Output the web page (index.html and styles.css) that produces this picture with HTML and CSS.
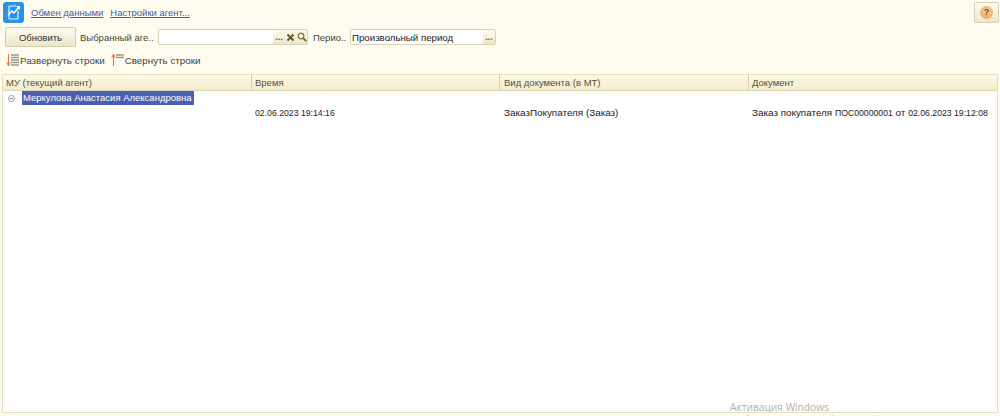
FILE: index.html
```html
<!DOCTYPE html>
<html lang="ru">
<head>
    <meta charset="UTF-8">
    <title>Обмен данными</title>
    <link rel="stylesheet" href="styles.css">
</head>
<body>
    <div class="topbar">
        <svg class="app-icon" width="21" height="21" viewBox="0 0 21 21">
            <rect width="21" height="21" rx="3" fill="#2a93e8"/>
            <path d="M13 4 H7 Q6 4 6 5 V16 Q6 17 7 17 H14 Q15 17 15 16 V9" fill="none" stroke="#e8f5ff" stroke-width="1.2"/>
            <path d="M5 13 L9 9 L11 11 L16 5" fill="none" stroke="#fff" stroke-width="1.5"/>
            <path d="M13 4 H17 V8 Z" fill="#fff"/>
        </svg>
        <a class="top-link" href="#">Обмен данными</a>
        <a class="top-link" href="#">Настройки агент...</a>
        <button class="help-btn"><span class="help-mark">?</span></button>
    </div>

    <div class="filters">
        <button class="refresh-btn">Обновить</button>
        <span class="field-label">Выбранный аге..</span>
        <div class="field field-agent">
            <span class="field-value"></span>
            <span class="field-btn">...</span>
            <span class="field-btn field-btn-icon">
                <svg width="9" height="9" viewBox="0 0 9 9">
                    <path d="M1.5 1.5 L7.5 7.5 M7.5 1.5 L1.5 7.5" stroke="#5e5a30" stroke-width="1.9"/>
                </svg>
            </span>
            <span class="field-btn field-btn-icon">
                <svg width="10" height="10" viewBox="0 0 10 10">
                    <circle cx="4" cy="4" r="2.8" fill="none" stroke="#8a7c3c" stroke-width="1.3"/>
                    <path d="M6 6 L9.2 9.2" stroke="#6a5c2c" stroke-width="1.7"/>
                </svg>
            </span>
        </div>
        <span class="field-label label-period">Перио..</span>
        <div class="field field-period">
            <span class="field-value">Произвольный период</span>
            <span class="field-btn">...</span>
        </div>
    </div>

    <div class="actions">
        <span class="action">
            <svg width="13" height="12" viewBox="0 0 13 12">
                <path d="M2.5 0 V11 M0.8 8.5 L2.5 11.5 L4.2 8.5" fill="none" stroke="#e8764a" stroke-width="1.1"/>
                <path d="M5 1 H13 M5 3.5 H13 M5 6 H13 M5 8.5 H13 M5 11 H13" stroke="#96968c" stroke-width="1.3"/>
            </svg>
            Развернуть строки
        </span>
        <span class="action">
            <svg width="13" height="12" viewBox="0 0 13 12">
                <path d="M2.5 12 V1 M0.8 3.5 L2.5 0.5 L4.2 3.5" fill="none" stroke="#e8764a" stroke-width="1.1"/>
                <path d="M5 1 H13 M5 3.5 H13" stroke="#96968c" stroke-width="1.3"/>
            </svg>
            Свернуть строки
        </span>
    </div>

    <div class="grid">
        <div class="grid-head">
            <div class="col col-agent">МУ (текущий агент)</div>
            <div class="col col-time">Время</div>
            <div class="col col-type">Вид документа (в МТ)</div>
            <div class="col col-doc">Документ</div>
        </div>
        <div class="group-row">
            <span class="collapse-mark"></span>
            <span class="selected">Меркулова Анастасия Александровна</span>
        </div>
        <div class="doc-row">
            <div class="col col-agent"></div>
            <div class="col col-time"><span class="num">02.06.2023 19:14:16</span></div>
            <div class="col col-type">ЗаказПокупателя (Заказ)</div>
            <div class="col col-doc">Заказ покупателя <span class="num">ПОС00000001</span> от <span class="num">02.06.2023 19:12:08</span></div>
        </div>
    </div>

    <div class="watermark">Активация Windows</div>
    <div class="watermark-sub">Чтобы активировать Windows, перейдите в раздел "Параметры".</div>
</body>
</html>
```

FILE: styles.css
```css
* {
    margin: 0;
    padding: 0;
    box-sizing: border-box;
}

html, body {
    height: 416px;
    overflow: hidden;
}

body {
    position: relative;
    font-family: "Liberation Sans", Arial, sans-serif;
    font-size: 9.5px;
    background-color: #fefbef;
    color: #44443a;
    padding: 2px 2px 0 2px;
}

.topbar {
    display: flex;
    align-items: center;
    height: 21px;
    padding-left: 1px;
    gap: 7px;
}

.app-icon {
    flex-shrink: 0;
}

.top-link {
    color: #3c5fa8;
    font-size: 9.5px;
}

.help-btn {
    margin-left: auto;
    margin-right: -1px;
    width: 25px;
    height: 21px;
    border: 1px solid #d6d0b4;
    border-radius: 2px;
    background: linear-gradient(#fdfbee, #ece7cd);
    display: flex;
    align-items: center;
    justify-content: center;
}

.help-mark {
    width: 13px;
    height: 13px;
    border-radius: 50%;
    background: radial-gradient(circle at 50% 40%, #f6d6a0, #e0a050);
    color: #6a4a20;
    font-size: 9px;
    font-weight: bold;
    line-height: 13px;
    text-align: center;
    font-family: "Liberation Sans", Arial, sans-serif;
}

.filters {
    display: flex;
    align-items: center;
    height: 20px;
    margin-top: 4px;
    padding-left: 3px;
}

.refresh-btn {
    width: 71px;
    height: 20px;
    border: 1px solid #d3cdb0;
    border-radius: 2px;
    background: linear-gradient(#fdfbee, #ebe6cc);
    font-family: inherit;
    font-size: 9.5px;
    color: #33332a;
    margin-right: 4px;
}

.field-label {
    width: 78px;
    white-space: nowrap;
}

.label-period {
    width: 37px;
    margin-left: 5px;
}

.field {
    display: flex;
    align-items: center;
    height: 16px;
    background-color: #fff;
    border: 1px solid #d8d2b6;
    border-radius: 2px;
}

.field-agent {
    width: 150px;
}

.field-period {
    width: 146px;
}

.field-value {
    flex: 1;
    padding-left: 1px;
    color: #222;
    font-size: 9.7px;
}

.field-btn {
    width: 12px;
    height: 14px;
    background: linear-gradient(#fdfbee, #ebe6cc);
    color: #6a5c2c;
    font-weight: bold;
    line-height: 15px;
    text-align: center;
    font-size: 9px;
}

.field-btn-icon {
    width: 11px;
    display: flex;
    align-items: center;
    justify-content: center;
}

.actions {
    display: flex;
    align-items: center;
    gap: 6px;
    height: 14px;
    margin-top: 6px;
    padding-left: 4px;
    font-size: 9.8px;
}

.action {
    display: flex;
    align-items: center;
    gap: 1px;
    white-space: nowrap;
}

.grid {
    height: 339px;
    margin-top: 7px;
    background-color: #fff;
    border: 1px solid #e4dfc4;
}

.grid-head {
    display: flex;
    height: 16px;
    background: linear-gradient(#fdf9e8, #f3ecca);
    border-bottom: 1px solid #dcd5ae;
    line-height: 15px;
    color: #55503a;
}

.grid-head .col {
    border-right: 1px solid #d6cfa8;
}

.col {
    flex-shrink: 0;
    padding-left: 3px;
    white-space: nowrap;
}

.col-agent {
    width: 249px;
}

.col-time {
    width: 248px;
}

.col-type {
    width: 249px;
    padding-left: 4px;
}

.col-doc {
    width: 248px;
}

.grid-head .col-doc {
    border-right: none;
}

.group-row {
    display: flex;
    align-items: center;
    height: 14px;
    padding-left: 5px;
}

.collapse-mark {
    position: relative;
    width: 7px;
    height: 7px;
    border: 1px solid #9a9a90;
    border-radius: 50%;
    margin-right: 7px;
}

.collapse-mark::after {
    content: "";
    position: absolute;
    left: 1px;
    top: 2px;
    width: 3px;
    height: 1px;
    background-color: #808078;
}

.selected {
    background-color: #4a5fb4;
    color: #fff;
    padding: 0 2px 0 1px;
    line-height: 14px;
    white-space: nowrap;
}

.doc-row {
    display: flex;
    height: 15px;
    line-height: 15px;
    color: #222;
    font-size: 9.9px;
}

.num {
    font-size: 8.7px;
}

.watermark {
    position: absolute;
    left: 730px;
    top: 400px;
    font-family: "Open Sans", sans-serif;
    font-size: 10.2px;
    color: #b0b0a8;
}

.watermark-sub {
    position: absolute;
    left: 730px;
    top: 414px;
    font-size: 8.6px;
    color: #c4c4bc;
    white-space: nowrap;
}
```
